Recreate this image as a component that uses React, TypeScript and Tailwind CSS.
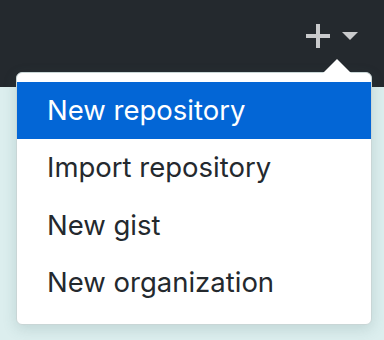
export default function App() {
  const items = ["New repository", "Import repository", "New gist", "New organization"];
  return (
    <div className="w-[384px] h-[340px] bg-[#dceeee] overflow-hidden relative" style={{ fontFamily: "Inter, 'Noto Sans', sans-serif" }}>
      <div className="h-[87px] bg-[#24292e] flex justify-end items-start pt-[24px] pr-[26px]">
        <div className="flex items-center gap-[12px]">
          <svg width="24" height="24" viewBox="0 0 24 24">
            <rect x="10" y="0" width="4" height="24" fill="#c9cacc" />
            <rect x="0" y="10" width="24" height="4" fill="#c9cacc" />
          </svg>
          <svg width="16" height="8" viewBox="0 0 16 8">
            <polygon points="0,0 16,0 8,8" fill="#c9cacc" />
          </svg>
        </div>
      </div>
      <div className="absolute left-[16px] top-[72px] w-[356px] bg-white rounded-[6px] border border-[#c9d6d6] shadow-[0_4px_14px_rgba(60,100,100,0.18)] pt-[9px] pb-[12px]">
        <svg className="absolute top-[-15px] right-[20px]" width="28" height="15" viewBox="0 0 28 15">
          <polygon points="0,15 14,1 28,15" fill="#ffffff" />
        </svg>
        {items.map((t, i) => (
          <div
            key={t}
            className={
              i === 0
                ? "h-[57px] flex items-center pl-[30px] bg-[#0366d6] text-white text-[27.5px]"
                : "h-[57.5px] flex items-center pl-[30px] text-[#24292e] text-[27.5px]"
            }
          >
            {t}
          </div>
        ))}
      </div>
    </div>
  );
}
